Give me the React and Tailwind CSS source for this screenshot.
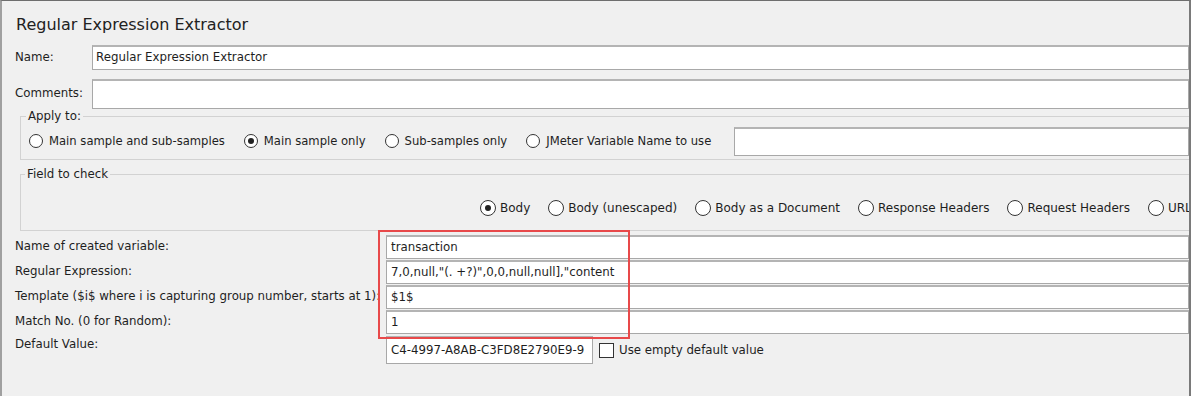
import React from "react"

function Radio({ checked, size = "w-[14px] h-[14px]" }) {
  return (
    <span className={`${size} shrink-0 rounded-full border border-[#333] bg-white flex items-center justify-center`}>
      {checked && <span className="w-[6px] h-[6px] rounded-full bg-[#222]" />}
    </span>
  )
}

function Input({ value = "", className = "" }) {
  return (
    <div className={`bg-white border border-[#a8a8a8] border-t-2 border-t-[#b4b4b4] flex items-center pl-[3px] whitespace-nowrap overflow-hidden ${className}`}>
      {value}
    </div>
  )
}

export default function App() {
  const applyTo = [
    { label: "Main sample and sub-samples", checked: false },
    { label: "Main sample only", checked: true },
    { label: "Sub-samples only", checked: false },
    { label: "JMeter Variable Name to use", checked: false },
  ]
  const fields = [
    { label: "Body", checked: true },
    { label: "Body (unescaped)" },
    { label: "Body as a Document" },
    { label: "Response Headers" },
    { label: "Request Headers" },
    { label: "URL" },
  ]
  const rows = [
    ["Name of created variable:", "transaction"],
    ["Regular Expression:", '7,0,null,"(. +?)",0,0,null,null],"content'],
    ["Template ($i$ where i is capturing group number, starts at 1):", "$1$"],
    ["Match No. (0 for Random):", "1"],
  ]

  return (
    <div className="relative w-[1191px] h-[396px] overflow-hidden bg-[#f0f0f0] border-t border-t-[#6e6e6e] border-l-2 border-l-[#a0a0a0] border-r-2 border-r-[#7a7a7a] text-[#1e1e1e] text-[11.8px] font-['DejaVu_Sans',sans-serif] flex flex-col">
      <div className="h-[44px] pl-[14px] pt-[14px] text-[16px] leading-[20px] text-[#222]">Regular Expression Extractor</div>

      <div className="flex h-[25px] items-center">
        <div className="w-[90px] pl-[13px]">Name:</div>
        <Input value="Regular Expression Extractor" className="flex-1 h-full" />
      </div>

      <div className="flex h-[30px] items-center mt-[9px]">
        <div className="w-[90px] pl-[13px]">Comments:</div>
        <Input className="flex-1 h-full" />
      </div>

      <fieldset className="ml-[18px] mt-[0px] border border-[#d2d2d2] border-r-0 p-0">
        <legend className="px-[2px] ml-[5px] leading-[14px]">Apply to:</legend>
        <div className="flex items-center h-[29px] pl-[8px] mt-[4px] mb-[3px] text-[11.6px]">
          {applyTo.map((r, i) => (
            <div key={i} className="flex items-center gap-[6px] mr-[19px]">
              <Radio checked={r.checked} />
              <span className="whitespace-nowrap">{r.label}</span>
            </div>
          ))}
          <Input className="flex-1 h-full ml-[4px]" />
        </div>
      </fieldset>

      <fieldset className="ml-[18px] mt-[7px] border border-[#d2d2d2] border-r-0 p-0">
        <legend className="px-[2px] ml-[4px] leading-[14px]">Field to check</legend>
        <div className="flex items-center h-[20px] whitespace-nowrap pl-[459px] mt-[17px] mb-[12px] text-[12px]">
          {fields.map((r, i) => (
            <div key={i} className="flex items-center gap-[4px] mr-[18px]">
              <Radio checked={r.checked} size="w-[16px] h-[16px]" />
              <span>{r.label}</span>
            </div>
          ))}
        </div>
      </fieldset>

      <div className="mt-[4px] flex flex-col gap-[1px]">
        {rows.map(([label, value], i) => (
          <div key={i} className="flex items-center h-[24px]">
            <div className="w-[384px] pl-[13px] whitespace-nowrap">{label}</div>
            <Input value={value} className="flex-1 h-full pl-[4px]" />
          </div>
        ))}
        <div className="flex items-start h-[28px] mt-[1px]">
          <div className="w-[384px] pl-[13px] whitespace-nowrap">Default Value:</div>
          <Input value="C4-4997-A8AB-C3FD8E2790E9-9" className="w-[207px] h-full pl-[4px]" />
          <div className="flex items-center gap-[5px] ml-[6px] mt-[6px]">
            <span className="w-[15px] h-[15px] border border-[#333] bg-white" />
            <span>Use empty default value</span>
          </div>
        </div>
      </div>

      <div className="absolute left-[376px] top-[229px] w-[252px] h-[109px] border-2 border-[#e8494a]" />
    </div>
  )
}
